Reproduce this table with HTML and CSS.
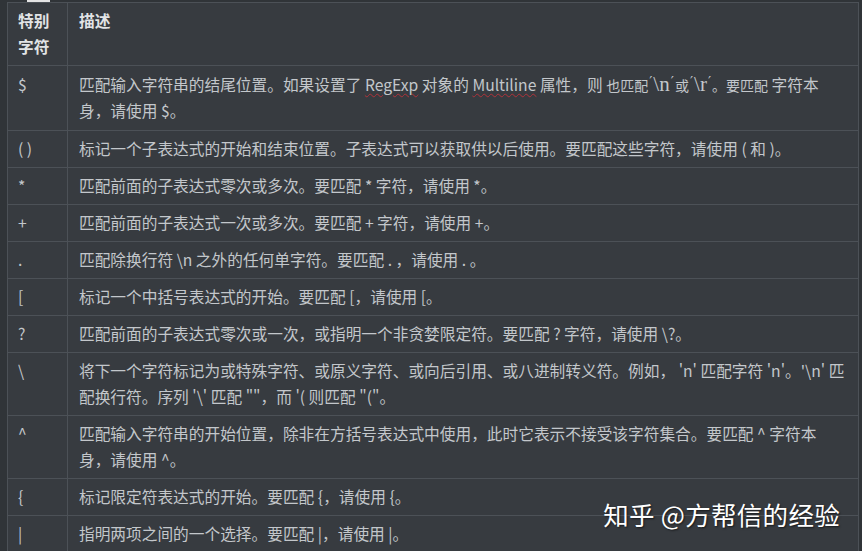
FILE: index.html
```html
<!DOCTYPE html>
<html lang="zh-CN">
<head>
  <meta charset="UTF-8" />
  <meta name="viewport" content="width=device-width, initial-scale=1.0"/>
  <title>正则表达式特别字符</title>
  <link rel="stylesheet" href="styles.css">
</head>
<body>
  <div class="tab-stub"></div>
  <table class="chars">
    <thead>
      <tr>
        <th class="sym">特别字符</th>
        <th>描述</th>
      </tr>
    </thead>
    <tbody>
      <tr class="tall">
        <td class="sym">$</td>
        <td>匹配输入字符串的结尾位置。如果设置了 <span class="typo">RegExp</span> 对象的 <span class="typo">Multiline</span> 属性，则 <span class="tex">也匹配<sup>′</sup><span class="mono">\n</span><sup>′</sup>或<sup>′</sup><span class="mono">\r</span><sup>′</sup>。要匹配</span> 字符本身，请使用 $。</td>
      </tr>
      <tr>
        <td class="sym">( )</td>
        <td>标记一个子表达式的开始和结束位置。子表达式可以获取供以后使用。要匹配这些字符，请使用 ( 和 )。</td>
      </tr>
      <tr>
        <td class="sym">*</td>
        <td>匹配前面的子表达式零次或多次。要匹配 * 字符，请使用 *。</td>
      </tr>
      <tr>
        <td class="sym">+</td>
        <td>匹配前面的子表达式一次或多次。要匹配 + 字符，请使用 +。</td>
      </tr>
      <tr>
        <td class="sym">.</td>
        <td>匹配除换行符 \n 之外的任何单字符。要匹配 . ，请使用 . 。</td>
      </tr>
      <tr>
        <td class="sym">[</td>
        <td>标记一个中括号表达式的开始。要匹配 [，请使用 [。</td>
      </tr>
      <tr>
        <td class="sym">?</td>
        <td>匹配前面的子表达式零次或一次，或指明一个非贪婪限定符。要匹配 ? 字符，请使用 \?。</td>
      </tr>
      <tr>
        <td class="sym">\</td>
        <td>将下一个字符标记为或特殊字符、或原义字符、或向后引用、或八进制转义符。例如， 'n' 匹配字符 'n'。'\n' 匹配换行符。序列 '\' 匹配 ""，而 '( 则匹配 "("。</td>
      </tr>
      <tr>
        <td class="sym">^</td>
        <td>匹配输入字符串的开始位置，除非在方括号表达式中使用，此时它表示不接受该字符集合。要匹配 ^ 字符本身，请使用 ^。</td>
      </tr>
      <tr>
        <td class="sym">{</td>
        <td>标记限定符表达式的开始。要匹配 {，请使用 {。</td>
      </tr>
      <tr>
        <td class="sym">|</td>
        <td>指明两项之间的一个选择。要匹配 |，请使用 |。</td>
      </tr>
    </tbody>
  </table>

  <div class="watermark">知乎 @方帮信的经验</div>
</body>
</html>
```

FILE: styles.css
```css
html, body {
  margin: 0;
  padding: 0;
  height: 100%;
  overflow: hidden;
}
body {
  position: relative;
  background-color: #303438;
  font-family: "Noto Sans CJK SC", "Noto Sans", sans-serif;
  font-size: 15.7px;
  color: #c3c7cb;
}
.tab-stub {
  width: 23px;
  height: 2px;
  margin-left: 27px;
  background-color: #e4e4e4;
}
.chars {
  margin-left: 7px;
  width: 852px;
  border-collapse: collapse;
  background-color: #373b40;
  table-layout: fixed;
}
.chars th,
.chars td {
  border: 1px solid #4c5157;
  padding: 5px 11px;
  line-height: 26px;
  text-align: left;
  vertical-align: top;
}
.chars th {
  font-weight: bold;
  color: #e2e4e6;
}
.chars .sym {
  width: 38px;
  padding-left: 10px;
}
.chars tr.tall td {
  padding-top: 6px;
  padding-bottom: 6px;
}
.typo {
  text-decoration: underline wavy #b0323a;
  text-decoration-thickness: 1px;
  text-underline-offset: 2px;
}
.tex {
  font-size: 14px;
}
.tex sup {
  font-family: "DejaVu Serif", serif;
  font-size: 14px;
  vertical-align: 4px;
  line-height: 0;
  margin: 0 1px;
}
.tex .mono {
  font-family: "Liberation Serif", serif;
  font-size: 21px;
  line-height: 0;
}
.watermark {
  position: absolute;
  right: 22px;
  top: 495px;
  font-size: 25.5px;
  color: #ffffff;
  letter-spacing: 0.3px;
  text-shadow: 1px 1px 2px rgba(0, 0, 0, 0.6);
}
```
